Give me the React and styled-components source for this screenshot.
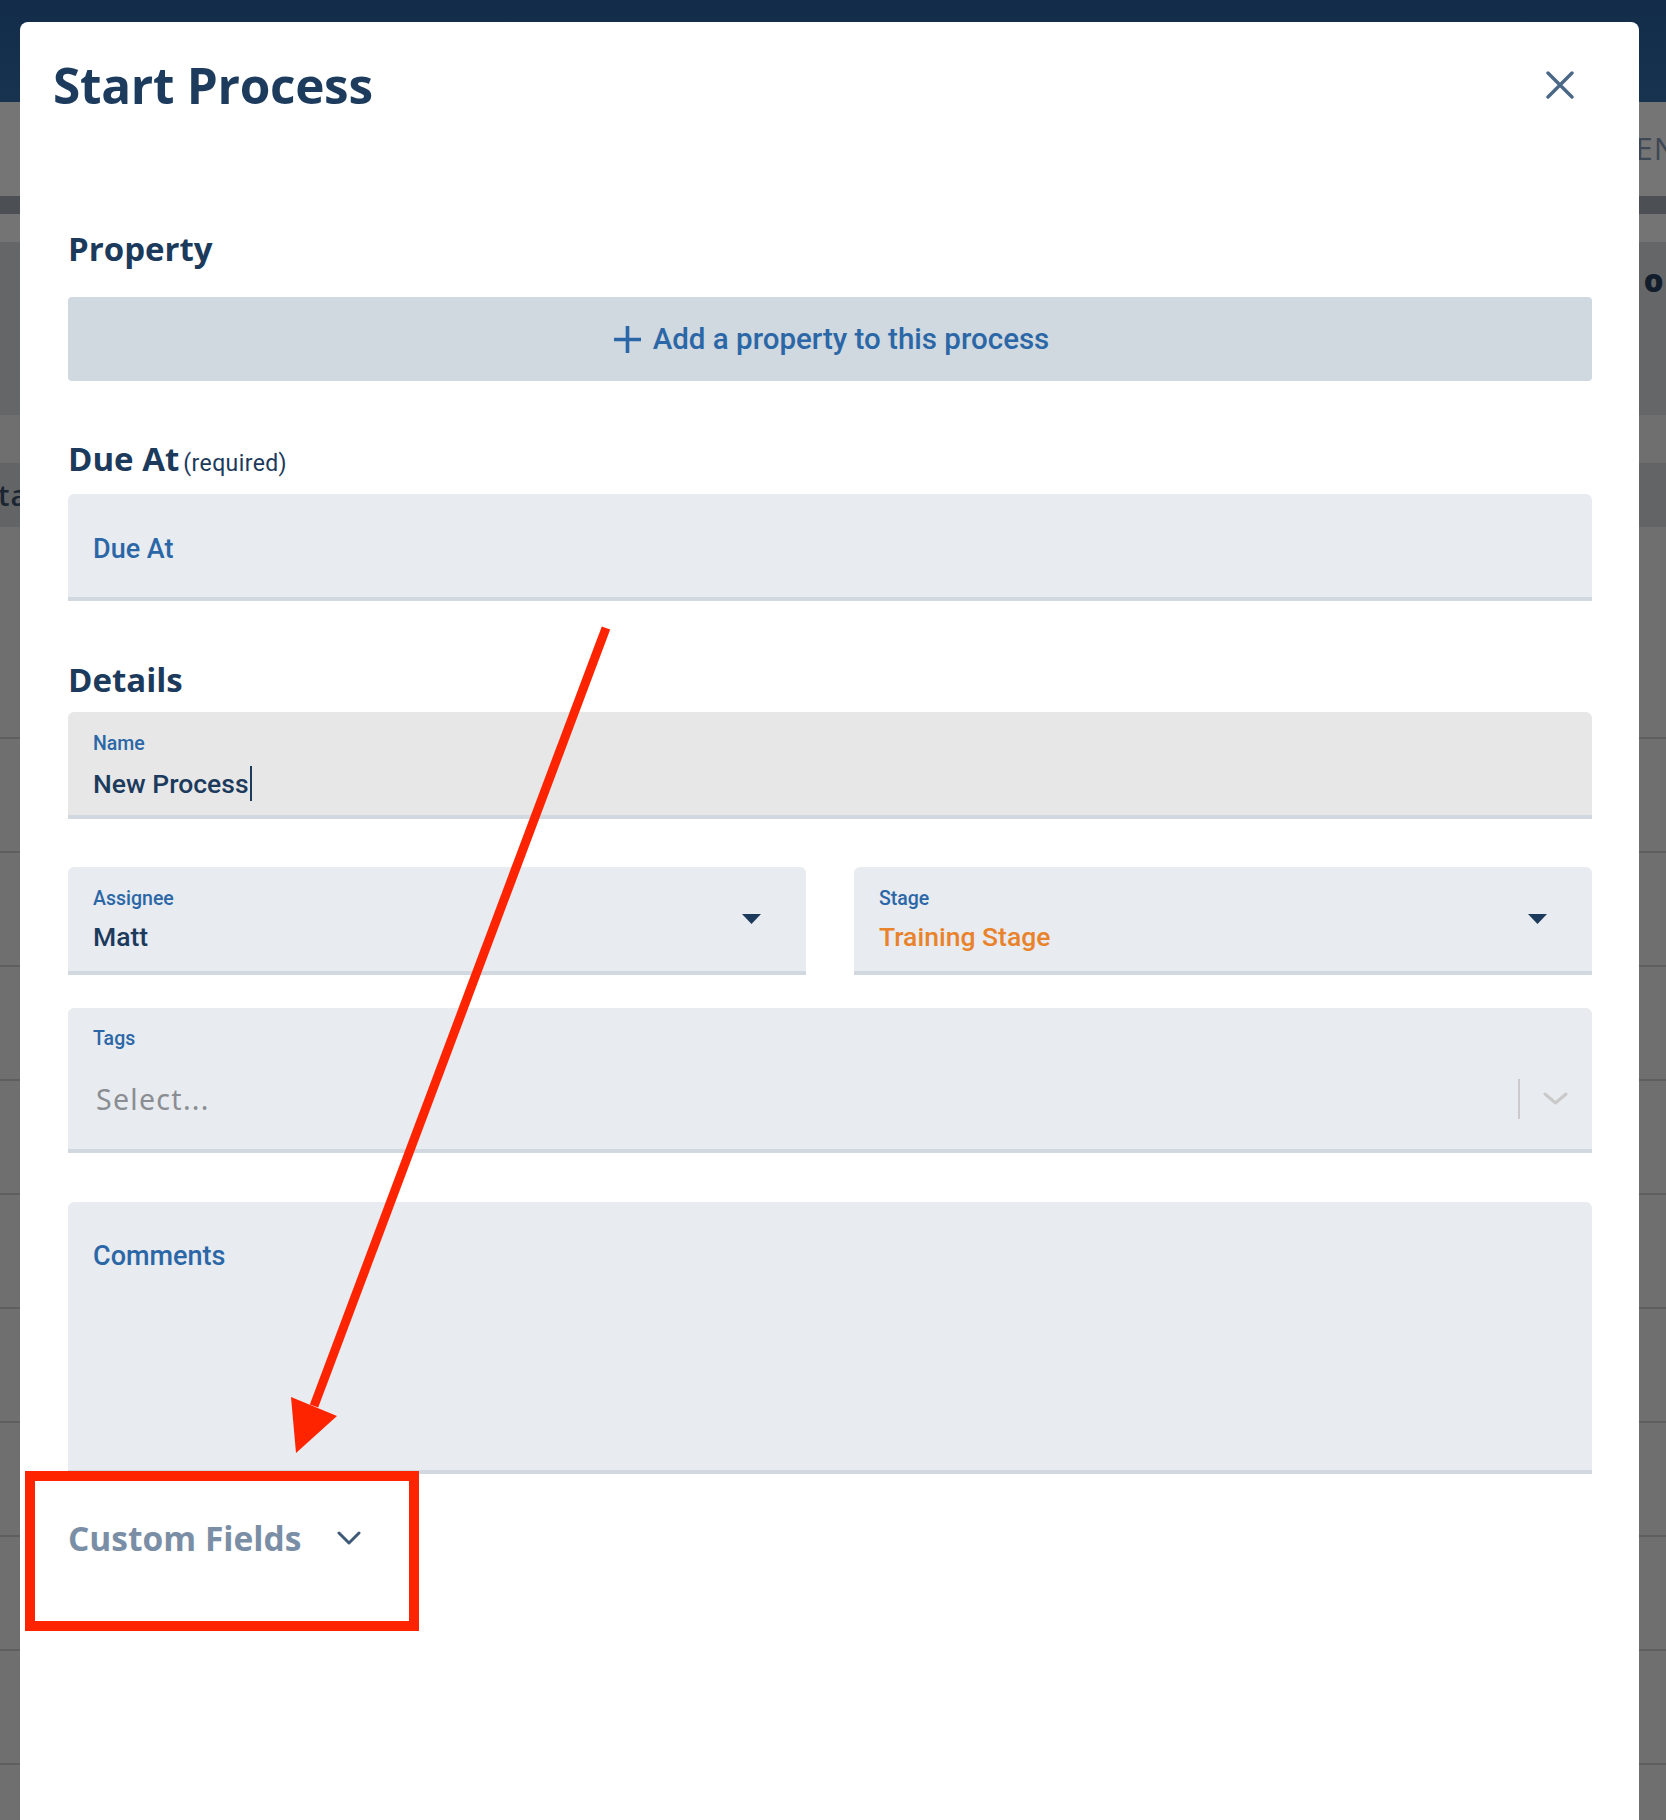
import React from 'react';
import styled, { createGlobalStyle } from 'styled-components';

const GlobalStyle = createGlobalStyle`
  html, body { margin: 0; padding: 0; }
  body {
    width: 1666px;
    height: 1820px;
    overflow: hidden;
    background: #6f6f6f;
    font-family: Roboto, "Liberation Sans", sans-serif;
  }
`;

const Screen = styled.div`
  position: relative;
  width: 1666px;
  height: 1820px;
  overflow: hidden;
`;

/* ---------- dimmed page behind the modal ---------- */
const Backdrop = styled.div`
  display: flex;
  flex-direction: column;
  height: 100%;
  background: #6f6f6f;
`;

const TopNav = styled.div`
  height: 102px;
  flex-shrink: 0;
  background: linear-gradient(180deg, #122c4a 0%, #17334f 100%);
`;

const Strip = styled.div`
  height: ${p => p.$h}px;
  flex-shrink: 0;
  box-sizing: border-box;
  background: ${p => p.$bg};
  display: flex;
  align-items: ${p => (p.$top ? 'flex-start' : 'center')};
  padding-top: ${p => p.$pt || 0}px;
  justify-content: ${p => (p.$left ? 'flex-start' : 'flex-end')};
  overflow: hidden;
`;

const PageText = styled.span`
  font-family: "Open Sans", "Liberation Sans", sans-serif;
  font-size: ${p => p.$size}px;
  line-height: 1.2;
  font-weight: ${p => p.$weight};
  color: ${p => p.$color};
  letter-spacing: 1px;
  white-space: nowrap;
  margin-right: ${p => p.$mr || 0}px;
  margin-left: ${p => p.$ml || 0}px;
`;

const BgRow = styled.div`
  height: 114px;
  flex-shrink: 0;
  border-top: 2px solid #5e5e5e;
  box-sizing: border-box;
  background: #6f6f6f;
`;

/* ---------- modal ---------- */
const Modal = styled.div`
  position: absolute;
  left: 20px;
  top: 22px;
  right: 27px;
  bottom: -20px;
  background: #ffffff;
  border-radius: 8px;
  display: flex;
  flex-direction: column;
`;

const Header = styled.div`
  height: 126px;
  flex-shrink: 0;
  display: flex;
  align-items: center;
  justify-content: space-between;
  padding: 0 65px 2px 33px;
`;

const Title = styled.h1`
  margin: 0;
  font-family: "Open Sans", "Liberation Sans", sans-serif;
  font-weight: 700;
  font-size: 49.5px;
  line-height: 60px;
  color: #1d3b5d;
  letter-spacing: -0.3px;
`;

const CloseButton = styled.button`
  width: 28px;
  height: 28px;
  padding: 0;
  border: 0;
  background: transparent;
  display: flex;
  align-items: center;
  justify-content: center;
  cursor: pointer;
`;

const Body = styled.div`
  display: flex;
  flex-direction: column;
  padding: 0 47px 0 48px;
`;

const SectionTitle = styled.h2`
  margin: ${p => p.$mt}px 0 0;
  font-family: "Open Sans", "Liberation Sans", sans-serif;
  font-weight: 700;
  font-size: 33px;
  line-height: 40px;
  color: #1b3a5c;
  display: flex;
  align-items: baseline;
  gap: 4px;
`;

const Required = styled.span`
  font-family: Roboto, "Liberation Sans", sans-serif;
  font-weight: 400;
  font-size: 23px;
  color: #1b3a5c;
  letter-spacing: 0.4px;
`;

const AddButton = styled.button`
  margin-top: 28px;
  height: 84px;
  border: 0;
  border-radius: 4px;
  background: #d0d8e0;
  display: flex;
  align-items: center;
  justify-content: center;
  gap: 11px;
  padding-left: 8px;
  font-family: Roboto, "Liberation Sans", sans-serif;
  font-weight: 500;
  font-size: 29.5px;
  color: #2b67a6;
  cursor: pointer;
`;

const Field = styled.div`
  margin-top: ${p => p.$mt}px;
  height: ${p => p.$h}px;
  flex: ${p => (p.$grow ? 1 : 'none')};
  box-sizing: content-box;
  background: ${p => (p.$focused ? '#e7e7e7' : '#e8ebf0')};
  border-bottom: 4px solid #d1d8e0;
  border-radius: 6px 6px 0 0;
  padding: 0 ${p => p.$pr || 24}px 0 25px;
  display: flex;
  align-items: ${p => (p.$center ? 'center' : 'flex-start')};
`;

const FieldMain = styled.div`
  flex: 1;
  align-self: flex-start;
  display: flex;
  flex-direction: column;
  padding-top: ${p => p.$pt}px;
  min-width: 0;
`;

const Label = styled.label`
  font-size: 19.5px;
  line-height: 24px;
  font-weight: 500;
  color: #2b67a6;
`;

const Placeholder = styled.div`
  font-size: 27px;
  line-height: 32px;
  font-weight: 500;
  color: #2b67a6;
`;

const Value = styled.div`
  margin-top: 10px;
  font-size: 26.5px;
  line-height: 32px;
  font-weight: 500;
  color: ${p => p.$color || '#1c3a5c'};
  display: flex;
  align-items: center;
`;

const Caret = styled.span`
  display: inline-block;
  width: 2px;
  height: 35px;
  margin-left: 1px;
  background: #1c3a5c;
`;

const Row = styled.div`
  margin-top: 48px;
  display: flex;
  gap: 48px;
`;

const SelectControl = styled.div`
  margin-top: 26px;
  display: flex;
  align-items: center;
  height: 44px;
`;

const SelectPlaceholder = styled.div`
  flex: 1;
  margin-left: 3px;
  font-family: "Noto Sans", "Open Sans", sans-serif;
  font-size: 28.5px;
  font-weight: 400;
  letter-spacing: 1.3px;
  color: #8a8d91;
`;

const Separator = styled.span`
  width: 2px;
  height: 40px;
  background: #cbcbcb;
  margin-right: 23px;
`;

const CustomFields = styled.button`
  margin-top: 44px;
  align-self: flex-start;
  border: 0;
  padding: 0;
  background: transparent;
  display: flex;
  align-items: center;
  gap: 36px;
  font-family: "Open Sans", "Liberation Sans", sans-serif;
  font-weight: 700;
  font-size: 33.5px;
  line-height: 40px;
  color: #7a8ea6;
  cursor: pointer;
`;

const Annotation = styled.svg`
  position: absolute;
  left: 0;
  top: 0;
  width: 1666px;
  height: 1820px;
  pointer-events: none;
`;

const DropTriangle = () => (
  <svg width="19" height="10" viewBox="0 0 19 10">
    <path d="M0 0 H19 L9.5 10 Z" fill="#1c3a5c" />
  </svg>
);

export default function App() {
  return (
    <Screen>
      <GlobalStyle />
      <Backdrop>
        <TopNav />
        <Strip $h={94} $bg="#757575">
          <PageText $size={31} $weight={500} $color="#3e4754" $mr={-12}>
            EN
          </PageText>
        </Strip>
        <Strip $h={18} $bg="#4c4f54" />
        <Strip $h={28} $bg="#747474" />
        <Strip $h={173} $bg="#656668" $top $pt={20}>
          <PageText $size={31} $weight={800} $color="#111d2b" $mr={-14}>
            or
          </PageText>
        </Strip>
        <Strip $h={48} $bg="#6f6f6f" />
        <Strip $h={64} $bg="#636466" $left>
          <PageText $size={29} $weight={600} $color="#1b2633" $ml={-2}>
            ta
          </PageText>
        </Strip>
        <Strip $h={210} $bg="#6f6f6f" />
        {Array.from({ length: 10 }).map((_, i) => (
          <BgRow key={i} />
        ))}
      </Backdrop>

      <Modal>
        <Header>
          <Title>Start Process</Title>
          <CloseButton aria-label="Close">
            <svg width="28" height="28" viewBox="0 0 28 28">
              <path
                d="M2 2 L26 26 M26 2 L2 26"
                stroke="#4b6886"
                strokeWidth="3.4"
                strokeLinecap="round"
              />
            </svg>
          </CloseButton>
        </Header>

        <Body>
          <SectionTitle $mt={79}>Property</SectionTitle>
          <AddButton>
            <svg width="29" height="29" viewBox="0 0 29 29">
              <path d="M14.5 1 V28 M1 14.5 H28" stroke="#2b67a6" strokeWidth="3.6" />
            </svg>
            Add a property to this process
          </AddButton>

          <SectionTitle $mt={58}>
            Due At<Required>(required)</Required>
          </SectionTitle>
          <Field $mt={10} $h={103}>
            <FieldMain $pt={39}>
              <Placeholder>Due At</Placeholder>
            </FieldMain>
          </Field>

          <SectionTitle $mt={59}>Details</SectionTitle>
          <Field $mt={12} $h={103} $focused>
            <FieldMain $pt={20}>
              <Label>Name</Label>
              <Value>
                New Process
                <Caret />
              </Value>
            </FieldMain>
          </Field>

          <Row>
            <Field $h={104} $grow $pr={45} $center>
              <FieldMain $pt={20}>
                <Label>Assignee</Label>
                <Value>Matt</Value>
              </FieldMain>
              <DropTriangle />
            </Field>
            <Field $h={104} $grow $pr={45} $center>
              <FieldMain $pt={20}>
                <Label>Stage</Label>
                <Value $color="#e8832b">Training Stage</Value>
              </FieldMain>
              <DropTriangle />
            </Field>
          </Row>

          <Field $mt={33} $h={141}>
            <FieldMain $pt={19}>
              <Label>Tags</Label>
              <SelectControl>
                <SelectPlaceholder>Select...</SelectPlaceholder>
                <Separator />
                <svg width="25" height="16" viewBox="0 0 25 16">
                  <path
                    d="M2 3 L12.5 12 L23 3"
                    fill="none"
                    stroke="#c9c9c9"
                    strokeWidth="3"
                    strokeLinecap="round"
                    strokeLinejoin="round"
                  />
                </svg>
              </SelectControl>
            </FieldMain>
          </Field>

          <Field $mt={49} $h={268}>
            <FieldMain $pt={38}>
              <Placeholder>Comments</Placeholder>
            </FieldMain>
          </Field>

          <CustomFields>
            Custom Fields
            <svg width="24" height="15" viewBox="0 0 24 15">
              <path
                d="M2 2 L12 12 L22 2"
                fill="none"
                stroke="#3e5a78"
                strokeWidth="3"
                strokeLinecap="round"
                strokeLinejoin="round"
              />
            </svg>
          </CustomFields>
        </Body>
      </Modal>

      <Annotation viewBox="0 0 1666 1820">
        <line x1="606" y1="628" x2="314" y2="1406" stroke="#ff2400" strokeWidth="9" />
        <polygon points="296,1453 291,1397 337,1416" fill="#ff2400" />
        <rect x="30" y="1476" width="384" height="150" fill="none" stroke="#ff2400" strokeWidth="10" />
      </Annotation>
    </Screen>
  );
}
